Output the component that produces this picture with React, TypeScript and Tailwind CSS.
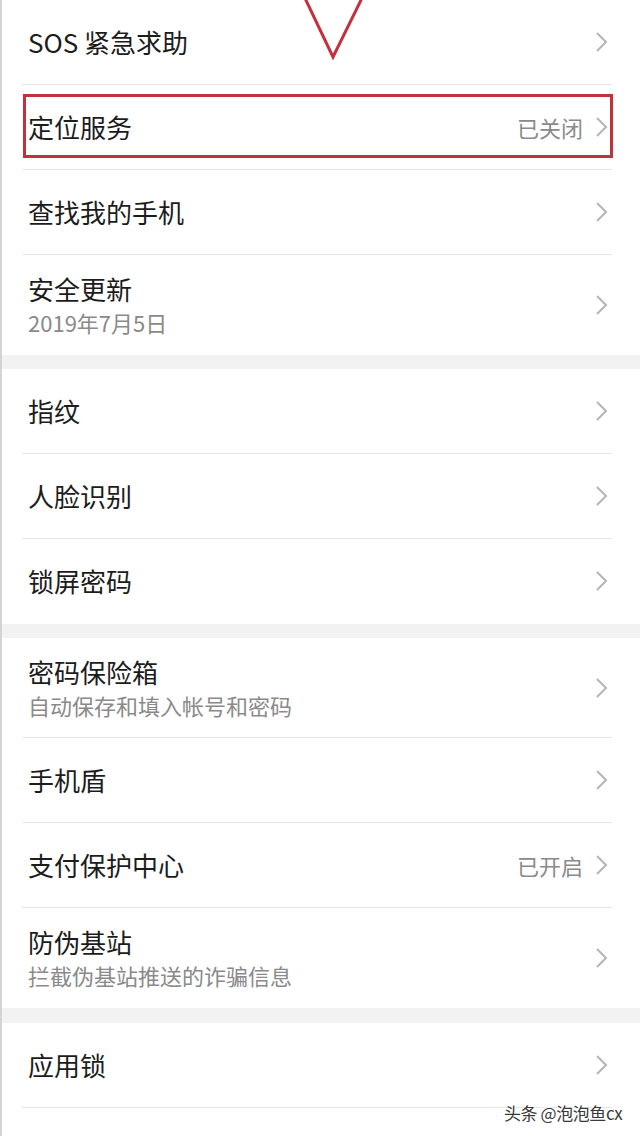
import React from 'react';

type Row = {
  title: string;
  sub?: string;
  value?: string;
  boxed?: boolean;
};

const sections: Row[][] = [
  [
    { title: 'SOS 紧急求助' },
    { title: '定位服务', value: '已关闭', boxed: true },
    { title: '查找我的手机' },
    { title: '安全更新', sub: '2019年7月5日' },
  ],
  [{ title: '指纹' }, { title: '人脸识别' }, { title: '锁屏密码' }],
  [
    { title: '密码保险箱', sub: '自动保存和填入帐号和密码' },
    { title: '手机盾' },
    { title: '支付保护中心', value: '已开启' },
    { title: '防伪基站', sub: '拦截伪基站推送的诈骗信息' },
  ],
  [{ title: '应用锁' }],
];

const gapClass = ['', 'h-[14px]', 'h-[14px]', 'h-[15px]'];

const Chevron = () => (
  <svg width="14" height="22" viewBox="0 0 14 22" className="shrink-0">
    <path d="M2 2 L11 11 L2 20" fill="none" stroke="#b5b5b5" strokeWidth="2" />
  </svg>
);

const SettingRow = ({ row, divider }: { row: Row; divider: boolean }) => (
  <div className={`relative flex flex-col ${row.sub ? 'h-[100px]' : 'h-[85px]'}`}>
    <div className="flex-1 flex items-center pl-[26px] pr-[31px]">
      <div className="flex-1 flex flex-col">
        <span className="text-[26px] leading-[32px] text-[#1c1c1c]">{row.title}</span>
        {row.sub && <span className="text-[22px] leading-[30px] mt-[2px] text-[#8a8a8a]">{row.sub}</span>}
      </div>
      {row.value && <span className="text-[22px] text-[#8a8a8a] mr-[12px]">{row.value}</span>}
      <Chevron />
    </div>
    <div className={`h-px ml-[20px] mr-[28px] ${divider ? 'bg-[#e6e6e6]' : ''}`} />
    {row.boxed && (
      <div className="absolute left-[21px] top-[9px] w-[590px] h-[64px] border-[3px] border-[#c4303b]" />
    )}
  </div>
);

export default function App() {
  return (
    <div
      className="relative w-[640px] h-[1136px] overflow-hidden bg-white border-l-2 border-[#d4d4d4]"
      style={{ fontFamily: '"Noto Sans CJK SC", "Noto Sans", sans-serif' }}
    >
      {sections.map((rows, si) => (
        <div key={si}>
          {si > 0 && <div className={`${gapClass[si]} bg-[#f2f2f2]`} />}
          {rows.map((row, ri) => (
            <SettingRow
              key={row.title}
              row={row}
              divider={!(ri === rows.length - 1 && si < sections.length - 1)}
            />
          ))}
        </div>
      ))}

      {/* red arrow annotation */}
      <svg className="absolute left-[296px] top-0" width="72" height="64" viewBox="0 0 72 64">
        <path d="M5 -6 L35 57 L66 -6" fill="none" stroke="#c4303b" strokeWidth="3" strokeLinejoin="miter" />
      </svg>

      {/* watermark */}
      <div
        className="absolute left-[502px] top-[1101px] text-[17px] leading-[24px] text-[#3a3a3a] tracking-tight"
        style={{ textShadow: '0 0 2px #fff, 0 0 2px #fff' }}
      >
        头条 @泡泡鱼cx
      </div>
    </div>
  );
}
